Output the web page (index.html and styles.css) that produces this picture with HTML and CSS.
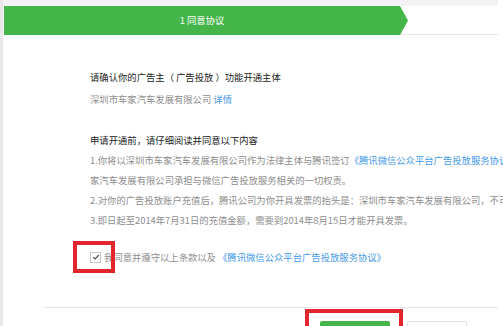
FILE: index.html
```html
<!DOCTYPE html>
<html lang="zh-CN">
<head>
<meta charset="utf-8">
<link rel="stylesheet" href="styles.css">
</head>
<body>
<div class="page">
  <div class="topband"></div>
  <div class="main">
    <div class="steps">
      <div class="step-active">1&nbsp;同意协议</div>
      <div class="step-rest"></div>
    </div>
    <div class="content">
      <div class="line dark">请确认你的广告主（ 广告投放 ）功能开通主体</div>
      <div class="line gray">深圳市车家汽车发展有限公司 <span class="link">详情</span></div>
      <div class="line dark section">申请开通前，请仔细阅读并同意以下内容</div>
      <div class="line gray first">1.你将以深圳市车家汽车发展有限公司作为法律主体与腾讯签订<span class="link">《腾讯微信公众平台广告投放服务协议》</span>，深圳市车</div>
      <div class="line gray">家汽车发展有限公司承担与微信广告投放服务相关的一切权责。</div>
      <div class="line gray">2.对你的广告投放账户充值后，腾讯公司为你开具发票的抬头是：深圳市车家汽车发展有限公司，不可更改。</div>
      <div class="line gray">3.即日起至2014年7月31日的充值金额，需要到2014年8月15日才能开具发票。</div>
      <div class="agree">
        <span class="check-wrap">
          <span class="checkbox"><svg width="8" height="8" viewBox="0 0 8 8"><path d="M1.3 4.2 L3.2 6 L6.8 2" fill="none" stroke="#555" stroke-width="1.2"/></svg></span>
          <span class="redbox"></span>
        </span>
        <span class="gray">我同意并遵守以上条款以及 <span class="link">《腾讯微信公众平台广告投放服务协议》</span></span>
      </div>
    </div>
    <div class="footer">
      <div class="btn-wrap">
        <span class="btn-primary">下一步</span>
      </div>
      <span class="btn-default">取消</span>
    </div>
  </div>
</div>
</body>
</html>
```
FILE: styles.css
```css
html, body {
  margin: 0;
  padding: 0;
  background: #ffffff;
  overflow: hidden;
  width: 503px;
  height: 326px;
}
.page {
  position: relative;
  width: 503px;
  height: 326px;
  overflow: hidden;
  font-family: "Microsoft YaHei", "Noto Sans CJK SC", "Noto Sans", sans-serif;
  font-size: 9.33px;
  border-left: 3px solid #e8e8ec;
  box-sizing: border-box;
}
.topband {
  height: 6px;
  width: 495px;
  background: #f3f3f6;
}
.main {
  width: 495px;
}
.steps {
  display: flex;
  height: 29px;
  padding-left: 1px;
}
.step-active {
  width: 404px;
  height: 29px;
  background: #44b549;
  color: #ffffff;
  line-height: 29px;
  text-align: center;
  padding-right: 8px;
  box-sizing: border-box;
  clip-path: polygon(0 0, 396px 0, 404px 50%, 396px 100%, 0 100%);
  flex: none;
}
.step-rest {
  flex: 1;
  margin-left: -8px;
  border-bottom: 1px solid #e7e7eb;
}
.content {
  padding-left: 87px;
  padding-top: 32px;
  white-space: nowrap;
}
.line {
  line-height: 20px;
  height: 20px;
}
.line + .line { margin-top: 2px; }
.line.gray + .line.gray { margin-top: 0; }
.line.first { margin-top: 0; }
.dark { color: #222222; }
.gray { color: #8d8d8d; }
.link { color: #459ae9; }
.section { margin-top: 21px !important; }
.agree {
  display: flex;
  align-items: center;
  margin-top: 17px;
  height: 20px;
}
.check-wrap {
  position: relative;
  display: inline-flex;
  margin-right: 3px;
}
.checkbox {
  width: 9px;
  height: 9px;
  border: 1px solid #c8c8c8;
  background: #fff;
  display: inline-flex;
  align-items: center;
  justify-content: center;
}
.redbox {
  position: absolute;
  left: -17px;
  top: -11px;
  width: 34px;
  height: 24px;
  border: 4px solid #e3262d;
}
.footer {
  margin-left: 40px;
  margin-top: 40px;
  border-top: 1px solid #e7e7eb;
  display: flex;
  padding-left: 262px;
  padding-top: 1px;
}
.btn-wrap {
  border: 4px solid #e3262d;
  border-bottom: none;
  width: 98px;
  height: 40px;
  box-sizing: border-box;
  padding: 8px 0 0 11px;
}
.btn-primary {
  display: block;
  width: 70px;
  height: 28px;
  background: #44b549;
  border-radius: 2px;
  color: #fff;
  text-align: center;
  line-height: 28px;
}
.btn-default {
  display: block;
  margin-left: 4px;
  margin-top: 12px;
  width: 60px;
  height: 28px;
  border: 1px solid #e0e0e0;
  border-radius: 2px;
  color: #999;
  text-align: center;
  line-height: 16px;
  box-sizing: border-box;
}
```
